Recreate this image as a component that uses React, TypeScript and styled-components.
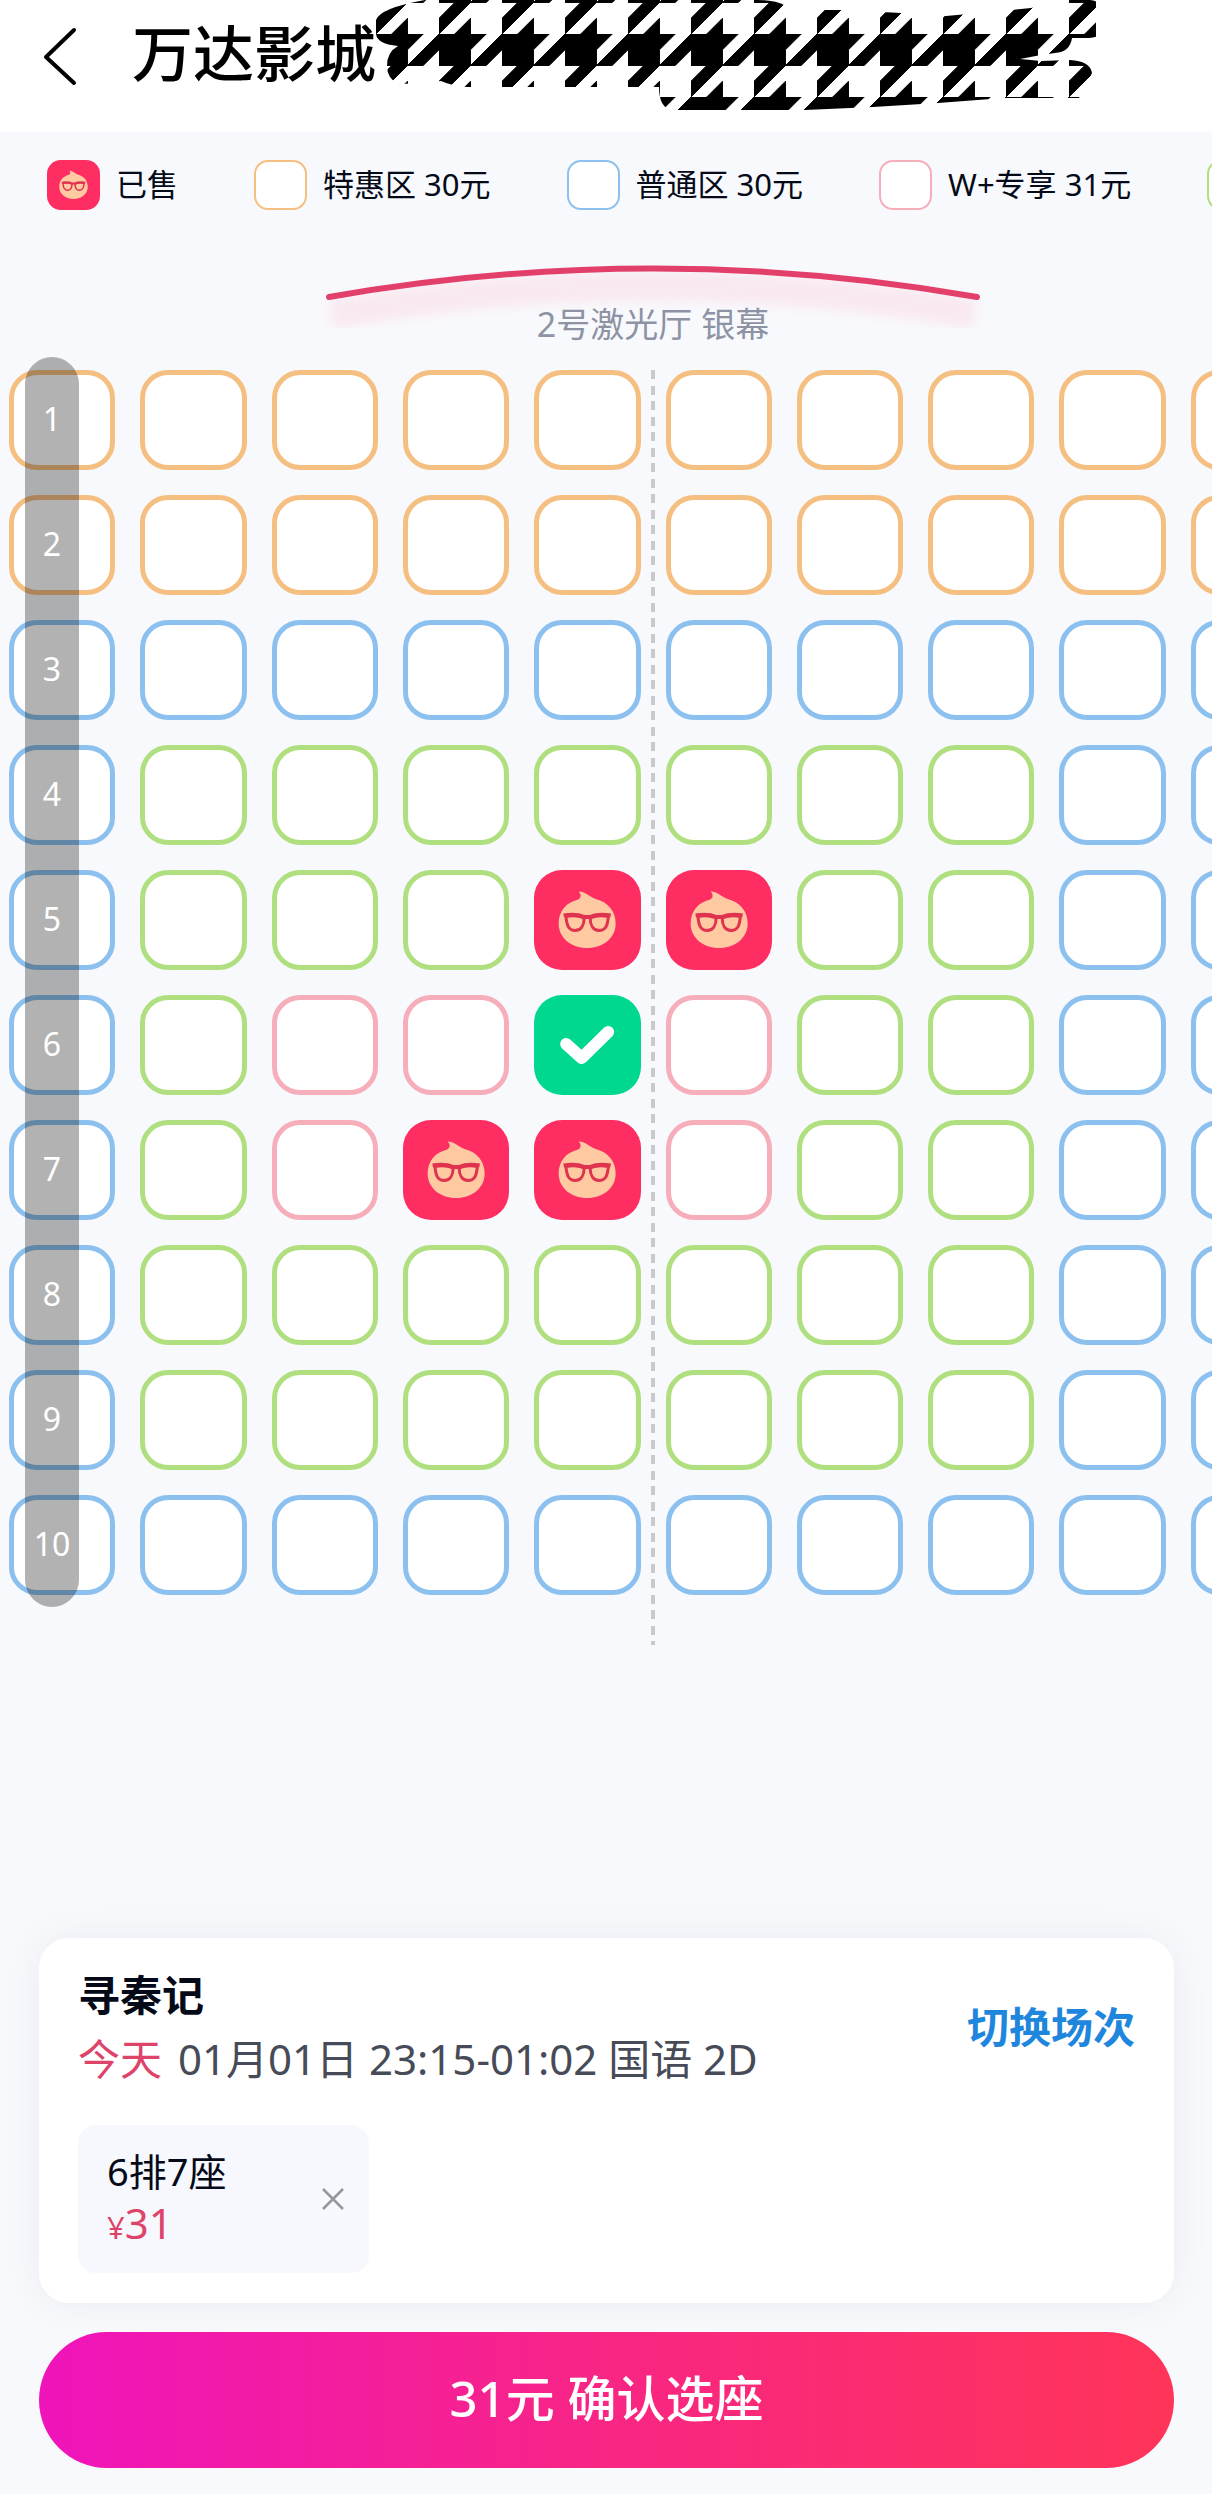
import React, { useState } from "react";
import styled, { createGlobalStyle, css } from "styled-components";

const GlobalStyle = createGlobalStyle`
  *, *::before, *::after { box-sizing: border-box; }
  body {
    margin: 0;
    background: #f8f9fd;
    color: #050a18;
    font-family: "Noto Sans", "Noto Sans CJK SC", sans-serif;
  }
  button {
    margin: 0;
    padding: 0;
    border: 0;
    background: none;
    font: inherit;
    color: inherit;
    cursor: pointer;
  }
  h1, h2, p, ul { margin: 0; padding: 0; }
  svg { display: block; }
`;

type Kind = "orange" | "blue" | "green" | "pink" | "sold" | "picked";

const seatColors: Record<Kind, string> = {
  orange: "#f6bf82",
  blue: "#8cc0ee",
  green: "#b0df80",
  pink: "#f6aebb",
  sold: "#ff2e62",
  picked: "#00d890",
};

const codes: Record<string, Kind> = {
  O: "orange",
  B: "blue",
  G: "green",
  P: "pink",
  S: "sold",
};

const hall = [
  "OOOOOOOOOO",
  "OOOOOOOOOO",
  "BBBBBBBBBB",
  "BGGGGGGGBB",
  "BGGGSSGGBB",
  "BGPPPPGGBB",
  "BGPSSPGGBB",
  "BGGGGGGGBB",
  "BGGGGGGGBB",
  "BBBBBBBBBB",
];

const Page = styled.div`
  display: flex;
  flex-direction: column;
  min-height: 100vh;
  overflow: hidden;
`;

const Header = styled.header`
  display: flex;
  align-items: flex-start;
  height: 132px;
  padding-left: 36px;
  background: #fff;
`;

const BackButton = styled.button`
  display: flex;
  flex: none;
  width: 96px;
  height: 112px;
  align-items: center;
`;

const Title = styled.h1`
  flex: none;
  font-size: 61px;
  line-height: 108px;
  font-weight: 500;
  color: #000;
`;

const Redaction = styled.svg`
  flex: none;
`;

const Legend = styled.ul`
  display: flex;
  gap: 76px;
  padding: 28px 0 0 47px;
  list-style: none;
`;

const LegendItem = styled.li`
  display: flex;
  flex: none;
  align-items: flex-start;
  gap: 16px;
  height: 50px;
  font-size: 31px;
  line-height: 48px;
  white-space: nowrap;
`;

const seatFill = css<{ $kind: Kind }>`
  border-color: ${(p) => seatColors[p.$kind]};
  background: ${(p) =>
    p.$kind === "sold" || p.$kind === "picked" ? seatColors[p.$kind] : "#fff"};
`;

const Swatch = styled.span<{ $kind: Kind }>`
  flex: none;
  width: 53px;
  height: 50px;
  border: ${(p) => (p.$kind === "sold" ? 0 : 2)}px solid;
  border-radius: 14px;
  overflow: hidden;
  ${seatFill}
`;

const Hall = styled.main`
  position: relative;
  flex: 1;
`;

const Canvas = styled.div`
  margin: 0 -85px 0 9px;
`;

const ScreenSign = styled.div`
  display: flex;
  flex-direction: column;
  align-items: center;
  height: 160px;
  padding-top: 40px;
`;

const ScreenArc = styled.svg`
  flex: none;
  margin-bottom: -50px;
`;

const ScreenName = styled.p`
  position: relative;
  font-size: 34px;
  line-height: 48px;
  color: #8d93a3;
`;

const Seats = styled.div`
  position: relative;
  display: grid;
  grid-template-columns: repeat(10, 1fr);
  grid-auto-rows: 100px;
  gap: 25px;
  padding-bottom: 50px;
`;

const CenterLine = styled.span`
  position: absolute;
  top: 0;
  bottom: 0;
  left: 50%;
  width: 4px;
  margin-left: -2px;
  background: repeating-linear-gradient(
    #c9cacd 0 9px,
    transparent 9px 16px,
    #c9cacd 16px 25px,
    transparent 25px 31px
  );
`;

const Seat = styled.button<{ $kind: Kind }>`
  border: ${(p) => (p.$kind === "sold" || p.$kind === "picked" ? 0 : 5)}px solid;
  border-radius: 28px;
  overflow: hidden;
  ${seatFill}
`;

const RowRail = styled.div`
  position: absolute;
  top: 147px;
  left: 25px;
  width: 54px;
  border-radius: 27px;
  background: rgba(0, 0, 0, 0.3);
  color: #fff;
  font-size: 32px;
  line-height: 123px;
  text-align: center;
  pointer-events: none;
`;

const RowNumber = styled.div`
  height: 125px;
`;

const Footer = styled.footer`
  display: flex;
  flex-direction: column;
  gap: 29px;
  padding: 0 38px 26px 39px;
`;

const Card = styled.section`
  padding: 25px 39px 30px;
  border-radius: 30px;
  background: #fff;
  box-shadow: 0 0 40px rgba(20, 30, 50, 0.06);
`;

const ShowRow = styled.div`
  display: flex;
  align-items: center;
  justify-content: space-between;
  margin-bottom: 34px;
`;

const Movie = styled.h2`
  font-size: 42px;
  line-height: 64px;
  font-weight: 700;
`;

const ShowTime = styled.p`
  display: flex;
  gap: 16px;
  font-size: 42px;
  line-height: 64px;
  color: #464b57;
`;

const Today = styled.span`
  color: #de4469;
`;

const SwitchButton = styled.button`
  font-size: 42px;
  line-height: 64px;
  font-weight: 700;
  color: #1f86de;
`;

const Ticket = styled.div`
  display: flex;
  align-items: center;
  justify-content: space-between;
  width: 291px;
  height: 148px;
  padding: 0 24px 0 29px;
  border-radius: 18px;
  background: #f7f8fd;
`;

const TicketSeat = styled.p`
  font-size: 38px;
  line-height: 52px;
`;

const Price = styled.p`
  font-size: 42px;
  line-height: 52px;
  color: #de4469;
`;

const Currency = styled.span`
  font-size: 31px;
`;

const Confirm = styled.button`
  height: 136px;
  padding-bottom: 5px;
  border-radius: 68px;
  background: linear-gradient(90deg, #ef14bb, #f9277f 55%, #ff3459);
  color: #fff;
  font-size: 49px;
  line-height: 64px;
  font-weight: 500;
`;

function Face({ width, height }: { width: string; height: string }) {
  return (
    <svg width={width} height={height} viewBox="0 0 106 100" aria-hidden="true">
      <path
        d="M44.500 21.500c8 .5 10 5 17 7.500 12 3 20 12 20 24.500C81.500 68 69 78 53 78S24.500 68 24.500 53.500C24.500 41 32 32.500 44 29.500c3-1.500 3.500-5 .5-8z"
        fill="#ffc9a1"
      />
      <g fill="none" stroke="#e0334f" strokeWidth="3" strokeLinejoin="round">
        <path d="M32 46.500c5-1 12.500-1 18 1.500 0 7-3 12.500-9 12.500s-8-4-9-12z" />
        <path d="M74 46.500c-5-1-12.500-1-18 1.500 0 7 3 12.500 9 12.500s8-4 9-12z" />
        <path d="M29.500 45.500c8-1.500 16-.5 21 1.500h5c5-2 13-3 21-1.500" strokeWidth="4" />
      </g>
    </svg>
  );
}

function Check() {
  return (
    <svg width="100%" height="100%" viewBox="0 0 106 100" aria-hidden="true">
      <path
        d="M32 49l15.500 14L74 37"
        fill="none"
        stroke="#fff"
        strokeWidth="12"
        strokeLinecap="round"
        strokeLinejoin="round"
      />
    </svg>
  );
}

function Houndstooth() {
  return (
    <Redaction width="720" height="112" viewBox="376 0 720 112" aria-hidden="true">
      <defs>
        <pattern id="tooth" x="691" y="34" width="63" height="63" patternUnits="userSpaceOnUse">
          <g transform="scale(15.75)" fill="#000" stroke="#000" strokeWidth="0.06">
            <path d="M0 0H3L2 1V2L0 4V3L1 2H0z" />
            <path d="M4 0V1L3 2H2z" />
            <path d="M2 3V4H1z" />
          </g>
        </pattern>
      </defs>
      <path
        fill="url(#tooth)"
        d="M376 20Q380 8 425 0H757Q775 0 786 6L822 10H840L902 13 946 16 1012 10 1031 8 1068 0H1090Q1100 1 1100 7V33Q1098 38 1089 38H1072Q1070 52 1055 53L1041 55 1020 59 1041 61 1070 60Q1090 61 1092 73L1085 88 1079 98H1004L938 103 873 107 805 110H672Q659 108 659 87H467Q452 86 441 81L427 83 398 84Q387 78 387 66 387 52 398 46 376 44 376 33z"
      />
    </Redaction>
  );
}

const legend: { kind: Kind; label?: string }[] = [
  { kind: "sold", label: "已售" },
  { kind: "orange", label: "特惠区 30元" },
  { kind: "blue", label: "普通区 30元" },
  { kind: "pink", label: "W+专享 31元" },
  { kind: "green" },
];

export default function App() {
  const [picked, setPicked] = useState<string | null>("5-4");

  return (
    <Page lang="zh-CN">
      <GlobalStyle />
      <Header>
        <BackButton aria-label="返回">
          <svg width="48" height="60" viewBox="0 0 48 60" fill="none">
            <path d="M38 4L10 31l28 26" stroke="#000" strokeWidth="4" strokeLinecap="round" strokeLinejoin="round" />
          </svg>
        </BackButton>
        <Title>万达影城</Title>
        <Houndstooth />
      </Header>

      <Legend>
        {legend.map(({ kind, label }) => (
          <LegendItem key={kind}>
            <Swatch $kind={kind}>
              {kind === "sold" && <Face width="53" height="50" />}
            </Swatch>
            {label}
          </LegendItem>
        ))}
      </Legend>

      <Hall>
        <Canvas>
          <ScreenSign>
            <ScreenArc width="700" height="100" viewBox="0 0 700 100" aria-hidden="true">
              <defs>
                <filter id="glow" x="-10%" y="-50%" width="120%" height="200%">
                  <feGaussianBlur stdDeviation="6" />
                </filter>
              </defs>
              <path d="M28 64Q350 8 672 64" fill="none" stroke="#f9e8f0" strokeWidth="30" filter="url(#glow)" />
              <path d="M26 47Q350 -10 674 47" fill="none" stroke="#e33f6b" strokeWidth="6" strokeLinecap="round" />
            </ScreenArc>
            <ScreenName>2号激光厅 银幕</ScreenName>
          </ScreenSign>
          <Seats>
            {hall.map((row, r) =>
              [...row].map((code, c) => {
                const id = `${r}-${c}`;
                const kind: Kind = id === picked ? "picked" : codes[code];
                return (
                  <Seat
                    key={id}
                    $kind={kind}
                    disabled={kind === "sold"}
                    aria-pressed={kind === "picked"}
                    aria-label={`${r + 1}排${c + 1}列`}
                    onClick={() => setPicked(id === picked ? null : id)}
                  >
                    {kind === "sold" && <Face width="100%" height="100%" />}
                    {kind === "picked" && <Check />}
                  </Seat>
                );
              })
            )}
            <CenterLine />
          </Seats>
        </Canvas>
        <RowRail>
          {hall.map((_, r) => (
            <RowNumber key={r}>{r + 1}</RowNumber>
          ))}
        </RowRail>
      </Hall>

      <Footer>
        <Card>
          <ShowRow>
            <div>
              <Movie>寻秦记</Movie>
              <ShowTime>
                <Today>今天</Today>
                <span>01月01日 23:15-01:02 国语 2D</span>
              </ShowTime>
            </div>
            <SwitchButton>切换场次</SwitchButton>
          </ShowRow>
          <Ticket>
            <div>
              <TicketSeat>6排7座</TicketSeat>
              <Price>
                <Currency>¥</Currency>31
              </Price>
            </div>
            <button aria-label="移除座位">
              <svg width="24" height="24" viewBox="0 0 24 24">
                <path d="M2 2l20 20M22 2L2 22" stroke="#94979e" strokeWidth="2.500" />
              </svg>
            </button>
          </Ticket>
        </Card>
        <Confirm>31元 确认选座</Confirm>
      </Footer>
    </Page>
  );
}
